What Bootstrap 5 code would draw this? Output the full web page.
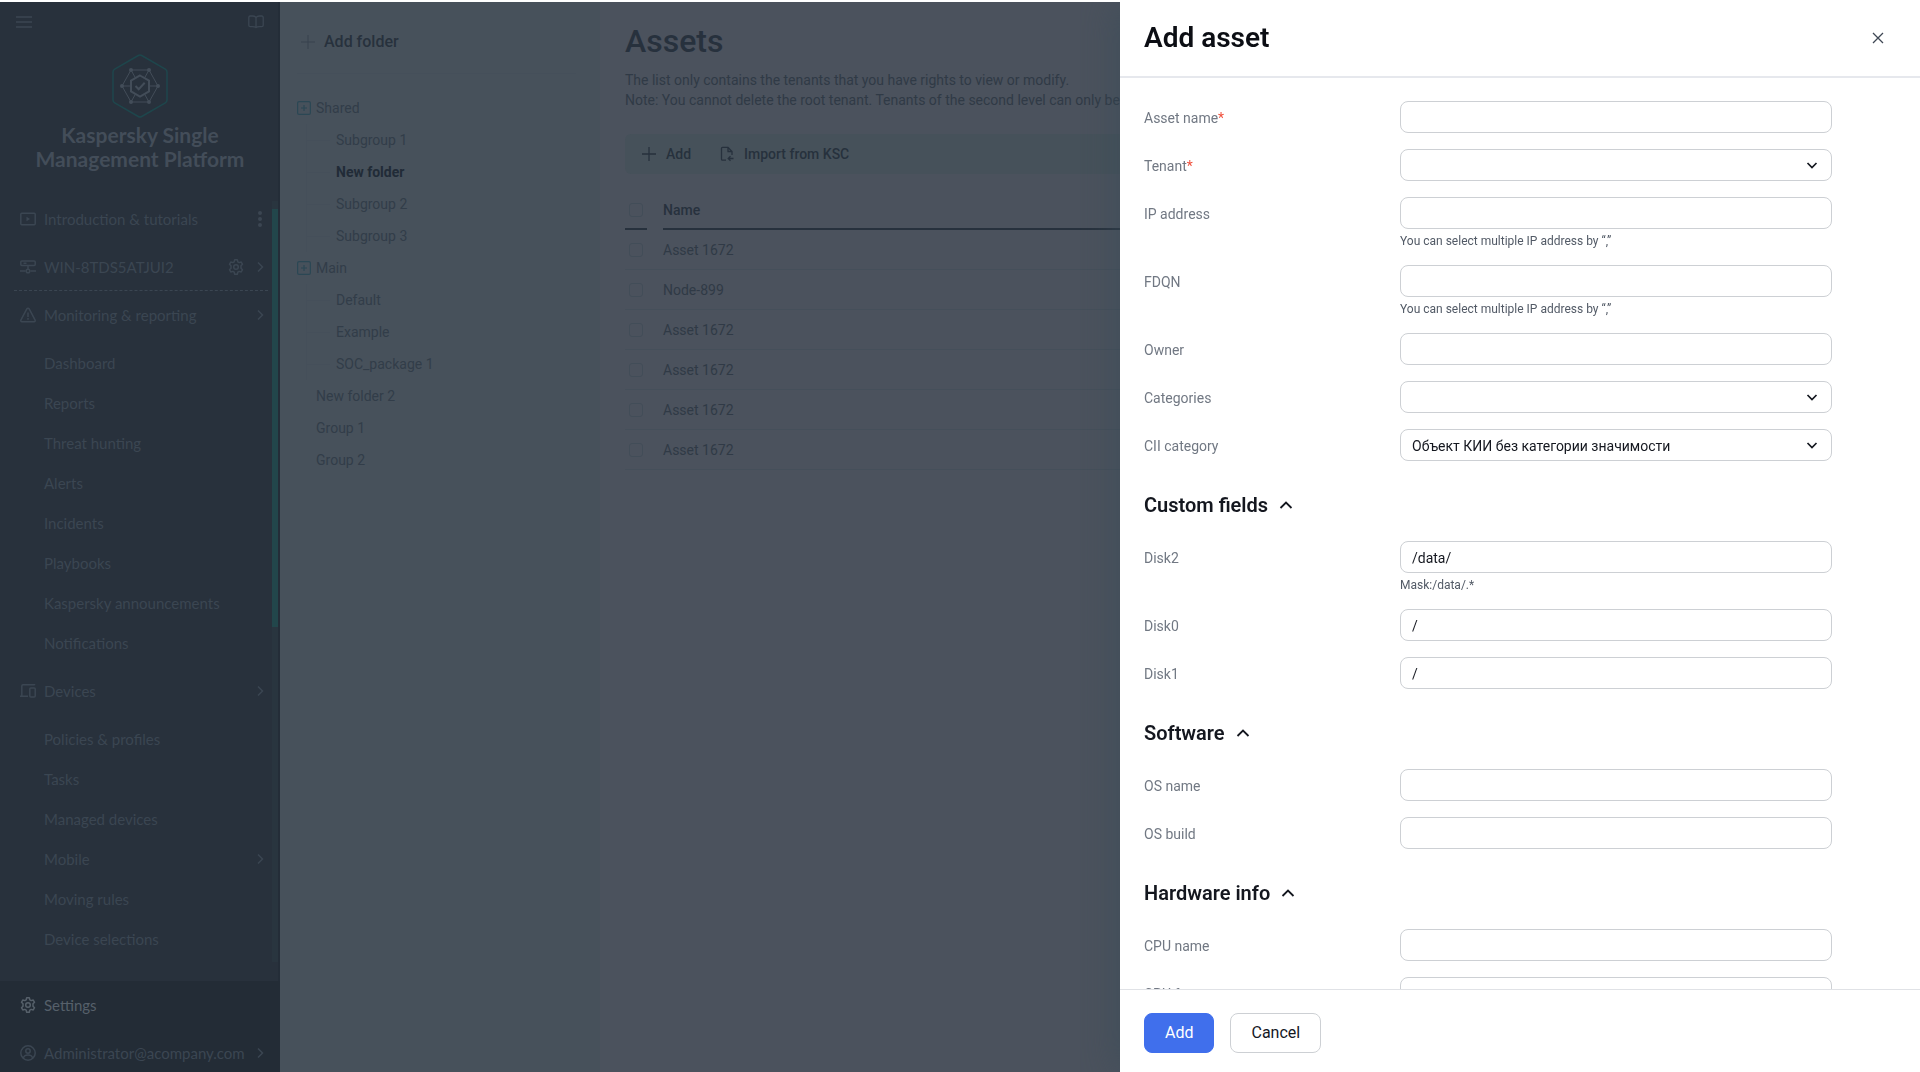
<!DOCTYPE html>
<html lang="en">
<head>
<meta charset="utf-8">
<meta name="viewport" content="width=device-width, initial-scale=1">
<title>Assets – Add asset</title>
<link href="https://cdn.jsdelivr.net/npm/bootstrap@5.3.0/dist/css/bootstrap.min.css" rel="stylesheet">
<style>
body{font-family:Roboto,"Noto Sans",sans-serif;font-size:14px;line-height:20px;color:#303a46;background:#fff}
svg{display:block;flex:none;fill:none;stroke:currentColor;stroke-width:1.5}
.app-shell{height:100vh;padding-top:2px;overflow:hidden}
/* navigation */
.side-nav{width:280px;background:#28313c;box-shadow:inset -2px 0 #242d38;color:#3b4652;font-family:Lato,"Noto Sans",sans-serif;font-size:15px}
.side-nav a,.side-nav button{color:inherit;text-decoration:none}
.side-top{padding:12px 16px 0}
.product{color:#434d59;font-size:21px;line-height:24px;font-weight:700;padding:24px 20px}
.product h1{font:inherit;margin:5px 0 0}
.product svg{color:#434d59}
.nav-main{height:48px;padding:0 4px 0 20px}
.nav-main svg:first-child{margin-right:8px}
.nav-sub{padding:4px 0}
.nav-sub a{height:40px;padding:0 4px 0 44px}
.dashed{border-bottom:1px dashed #3b4652;margin:0 4px 0 14px;padding:0 0 0 6px}
.nav-scroll{width:6px;background:#29353f;margin:6px 2px 19px 0;padding-top:8px}
.nav-thumb{width:6px;height:418px;background:#22464b}
.side-foot{background:#232c36;height:91px;overflow:hidden}
.side-foot .nav-main{padding-right:12px}
.side-foot .lit{color:#56606a}
/* folder tree */
.folders{width:320px;background:#47515b;padding:0 24px 0 17px;color:#323d49}
.add-folder{font-size:16px;font-weight:500;height:72px;padding:8px 0 0 4px;gap:9px;color:#27313d;border:0;border-bottom:1px solid #454f5a;background:none}
.add-folder svg{color:#39434f}
.tree{padding-top:18px}
.tree a,.tree button{color:inherit;text-decoration:none;height:32px;padding:0;border:0;background:none;font-size:14px}
.tree .node{gap:5px}
.tree .node svg{color:#2b4754}
.tree .leaf{padding-left:19px}
.tree .branch{margin-left:9px;border-left:1px solid #454f5a}
.tree .branch a{gap:6px;padding-left:0}
.tree .branch a::before{content:"";width:23px;height:1px;background:#454f5a}
.tree .branch .picked{color:#212b37;font-weight:700}
/* asset list */
.assets{background:#4b525d;padding:0 0 0 25px;min-width:0}
.assets h2{font-size:32px;line-height:40px;font-weight:500;margin:19px 0 9px;color:#27313d}
.tool-strip{background:#46515a;height:40px;border-radius:6px;margin-top:24px;padding:0 16px;gap:28px}
.tool-strip button{border:0;background:none;padding:0;color:#27313d;font-weight:500;gap:9px}
.list-grid{margin-top:17px;border-collapse:separate;border-spacing:0;width:100%}
.list-grid th,.list-grid td{height:40px;padding:0;border-bottom:1px solid #454f5a;font-weight:400;vertical-align:middle}
.list-grid th{font-weight:500;height:39px;color:#27313d;border-bottom:2px solid #27313d}
.list-grid .gap-col{border-bottom-color:#4b525d;width:16px}
.list-grid td.gap-col{border-bottom-color:#454f5a}
.list-grid .tick{width:22px;padding-left:4px}
.list-grid .form-check-input{display:block;width:14px;height:14px;margin:0;background:transparent;border:1px solid #424d58;border-radius:3px}
/* drawer */
.drawer.offcanvas{--bs-offcanvas-width:800px;top:2px;max-width:100%;border:0;background:#fff;color:#14171f;box-shadow:0 0 36px rgba(58,76,88,.75);clip-path:inset(0 0 0 -40px);visibility:visible}
.drawer-head{height:76px;border-bottom:2px solid #e6e8ed;padding:0 31px 2px 24px}
.drawer-head h2{font-size:28px;line-height:36px;font-weight:600;margin:0;color:#0c0e14}
.drawer-head button{border:0;background:none;padding:4px 5px;color:#3f4754}
.drawer-body{padding:23px 88px 0 24px;overflow:hidden;flex:1 1 0;min-height:0}
.field{margin-bottom:16px}
.field label{width:256px;flex:none;line-height:30px;padding-top:2px;color:#717883}
.field label span{color:#f0503c}
.field .form-control,.field .form-select{height:32px;border:1px solid #cdd0d4;border-radius:8px;font-size:14px;line-height:20px;padding:6px 11px 4px;color:#14171f;background-color:#fff}
.field .form-select{background-image:url("data:image/svg+xml,%3Csvg xmlns='http://www.w3.org/2000/svg' viewBox='0 0 16 16'%3E%3Cpath d='M3.5 6 8 10.5 12.5 6' fill='none' stroke='%2314171f' stroke-width='1.7'/%3E%3C/svg%3E");background-size:16px 16px;background-position:right 11px center;padding-right:36px}
.field .hint{font-size:12px;line-height:16px;margin-top:4px;color:#525a66}
.group-head{border:0;background:none;padding:0;margin:32px 0 24px;font-size:20px;line-height:24px;font-weight:600;gap:10px;color:#14171f}
.group-head svg{stroke-width:1.8}
.drawer-foot{border-top:1px solid #e0e2e6;height:83px;padding:23px 24px 0;gap:16px}
.drawer-foot .btn{height:40px;padding:0 20px;font-size:16px;line-height:24px;border-radius:8px}
.drawer-foot .btn-primary{background:#406fec;border-color:#406fec}
.drawer-foot .btn-plain{border:1px solid #cdd0d4;background:#fff;color:#14171f}
</style>
<script src="https://cdn.jsdelivr.net/npm/bootstrap@5.3.0/dist/js/bootstrap.bundle.min.js"></script>
</head>
<body>
<svg class="d-none">
  <symbol id="i-right" viewBox="0 0 16 16"><path d="M6 3.500 10.500 8 6 12.500"/></symbol>
  <symbol id="i-up" viewBox="0 0 16 16"><path d="M2.500 11 8 5.500 13.500 11"/></symbol>
  <symbol id="i-gear" viewBox="0 0 16 16"><path d="M6.700.8h2.600l.5 2 1.400.8 2-.6 1.300 2.300L13 6.800v2.400l1.500 1.500-1.300 2.300-2-.6-1.400.8-.5 2H6.700l-.5-2-1.400-.8-2 .6-1.300-2.300L3 9.200V6.800L1.500 5.300 2.800 3l2 .6 1.400-.8z" stroke-linejoin="round"/><circle cx="8" cy="8" r="2.300"/></symbol>
  <symbol id="i-expand" viewBox="0 0 14 14"><rect x=".6" y=".6" width="12.800" height="12.800" rx="1.500" stroke-width="1.200"/><path d="M7 4v6M4 7h6" stroke-width="1.200"/></symbol>
</svg>

<div class="app-shell d-flex">
  <nav class="side-nav d-flex flex-column flex-shrink-0" aria-label="Main">
    <div class="side-top d-flex justify-content-between">
      <button class="btn p-0 border-0" aria-label="Menu"><svg width="16" height="16"><path d="M0 3h16M0 8h16M0 13h16"/></svg></button>
      <button class="btn p-0 border-0" aria-label="Guide"><svg width="16" height="16"><path d="M8 3.500C7 2.300 6 2 4.500 2H2.200C1.300 2 .8 2.500.8 3.400v7.800c0 .9.500 1.400 1.400 1.400h2.300c1.500 0 2.700.2 3.500 1 .8-.8 2-1 3.500-1h2.300c.9 0 1.400-.5 1.400-1.400V3.400c0-.9-.5-1.400-1.400-1.400h-2.300C10 2 9 2.300 8 3.500zM8 3.500v10" stroke-width="1.300"/></svg></button>
    </div>
    <div class="product d-flex flex-column align-items-center text-center">
      <svg width="56" height="64" viewBox="0 0 56 64">
        <path d="M26.300 1.500q1.700-1 3.400 0l23.600 13.600q1.700 1 1.700 3v27.800q0 2-1.700 3L29.700 62.500q-1.700 1-3.400 0L2.700 48.900q-1.700-1-1.700-3V18.100q0-2 1.700-3z" stroke="#1e464c"/>
        <path d="M19 16h18l9 16-9 16H19l-9-16zM19 16l4.500 8M37 16l-4.500 8M19 48l4.500-8M37 48l-4.500-8M10 32h8M38 32h8" stroke-width="1"/>
        <path d="M28 21.500 37 26.700v10.600L28 42.500l-9-5.200V26.700z" stroke-width="2"/>
        <path d="m23.500 32 3.200 3.200 6-6.400" stroke-width="2"/>
        <g fill="currentColor" stroke="none"><circle cx="19" cy="16" r="2"/><circle cx="37" cy="16" r="2"/><circle cx="46" cy="32" r="2"/><circle cx="37" cy="48" r="2"/><circle cx="19" cy="48" r="2"/><circle cx="10" cy="32" r="2"/></g>
      </svg>
      <h1>Kaspersky Single<br>Management Platform</h1>
    </div>
    <div class="d-flex flex-fill overflow-hidden">
      <div class="flex-fill">
        <a href="#" class="nav-main d-flex align-items-center"><svg width="16" height="16"><rect x=".8" y="2.300" width="14.400" height="11.400" rx="1"/><path d="M6.500 5.800v4.400L10 8z" fill="currentColor" stroke="none"/></svg><span class="flex-fill">Introduction &amp; tutorials</span><svg width="16" height="16" viewBox="-6 0 16 16"><g fill="currentColor" stroke="none"><circle cx="2" cy="2" r="2"/><circle cx="2" cy="8" r="2"/><circle cx="2" cy="14" r="2"/></g></svg></a>
        <a href="#" class="nav-main dashed d-flex align-items-center"><svg width="16" height="16"><rect x=".8" y="2" width="14.400" height="4.500" rx="1"/><path d="M3.500 4.200h3M8 6.500v4M0 12h5.500M10.500 12H16"/><circle cx="8" cy="12" r="1.800"/></svg><span class="flex-fill">WIN-8TDS5ATJUI2</span><svg width="16" height="16" class="me-2"><use href="#i-gear"/></svg><svg width="16" height="16"><use href="#i-right"/></svg></a>
        <a href="#" class="nav-main d-flex align-items-center"><svg width="16" height="16"><path d="M8 1.200q.8 0 1.200.7l5.800 11q.7 1.700-1 1.900H2q-1.700-.2-1-1.900l5.800-11q.4-.7 1.200-.7zM8 5.500v4.500M8 11v1.700"/></svg><span class="flex-fill">Monitoring &amp; reporting</span><svg width="16" height="16"><use href="#i-right"/></svg></a>
        <div class="nav-sub">
          <a href="#" class="d-flex align-items-center">Dashboard</a>
          <a href="#" class="d-flex align-items-center">Reports</a>
          <a href="#" class="d-flex align-items-center">Threat hunting</a>
          <a href="#" class="d-flex align-items-center">Alerts</a>
          <a href="#" class="d-flex align-items-center">Incidents</a>
          <a href="#" class="d-flex align-items-center">Playbooks</a>
          <a href="#" class="d-flex align-items-center">Kaspersky announcements</a>
          <a href="#" class="d-flex align-items-center">Notifications</a>
        </div>
        <a href="#" class="nav-main d-flex align-items-center"><svg width="16" height="16"><path d="M14.500 2.200v-.4H3q-1.200 0-1.200 1.200v9.500M0 13.300h8"/><rect x="9.800" y="5" width="5.400" height="9" rx="1"/></svg><span class="flex-fill">Devices</span><svg width="16" height="16"><use href="#i-right"/></svg></a>
        <div class="nav-sub">
          <a href="#" class="d-flex align-items-center">Policies &amp; profiles</a>
          <a href="#" class="d-flex align-items-center">Tasks</a>
          <a href="#" class="d-flex align-items-center">Managed devices</a>
          <a href="#" class="d-flex align-items-center justify-content-between">Mobile<svg width="16" height="16"><use href="#i-right"/></svg></a>
          <a href="#" class="d-flex align-items-center">Moving rules</a>
          <a href="#" class="d-flex align-items-center">Device selections</a>
        </div>
      </div>
      <div class="nav-scroll flex-shrink-0"><div class="nav-thumb"></div></div>
    </div>
    <div class="side-foot flex-shrink-0">
      <a href="#" class="nav-main lit d-flex align-items-center"><svg width="16" height="16"><use href="#i-gear"/></svg>Settings</a>
      <a href="#" class="nav-main d-flex align-items-center"><svg width="16" height="16"><circle cx="8" cy="8" r="7.200"/><circle cx="8" cy="6" r="2.200"/><path d="M3.500 13q.5-3 4.500-3t4.500 3"/></svg><span class="flex-fill">Administrator@acompany.com</span><svg width="16" height="16"><use href="#i-right"/></svg></a>
    </div>
  </nav>

  <aside class="folders flex-shrink-0">
    <button class="add-folder d-flex align-items-center w-100"><svg width="14" height="14"><path d="M7 0v14M0 7h14" stroke-width="1"/></svg>Add folder</button>
    <div class="tree">
      <button class="node d-flex align-items-center"><svg width="14" height="14"><use href="#i-expand"/></svg>Shared</button>
      <div class="branch">
        <a href="#" class="d-flex align-items-center">Subgroup 1</a>
        <a href="#" class="d-flex align-items-center picked">New folder</a>
        <a href="#" class="d-flex align-items-center">Subgroup 2</a>
        <a href="#" class="d-flex align-items-center">Subgroup 3</a>
      </div>
      <button class="node d-flex align-items-center"><svg width="14" height="14"><use href="#i-expand"/></svg>Main</button>
      <div class="branch">
        <a href="#" class="d-flex align-items-center">Default</a>
        <a href="#" class="d-flex align-items-center">Example</a>
        <a href="#" class="d-flex align-items-center">SOC_package 1</a>
      </div>
      <a href="#" class="leaf d-flex align-items-center">New folder 2</a>
      <a href="#" class="leaf d-flex align-items-center">Group 1</a>
      <a href="#" class="leaf d-flex align-items-center">Group 2</a>
    </div>
  </aside>

  <main class="assets flex-fill">
    <h2>Assets</h2>
    <p class="mb-0 text-nowrap">The list only contains the tenants that you have rights to view or modify.<br>Note: You cannot delete the root tenant. Tenants of the second level can only be deleted.</p>
    <div class="tool-strip d-flex align-items-center">
      <button class="d-flex align-items-center"><svg width="16" height="16"><path d="M8 1v14M1 8h14" stroke-width="1.300"/></svg>Add</button>
      <button class="d-flex align-items-center"><svg width="16" height="16"><path d="M7 14.200H3.500q-1 0-1-1V2.300q0-1 1-1H9L13 5.500V9M9 1.500V5.500h4M14.500 12.500H9.500M11.500 10.200l-2.300 2.300 2.300 2.300" stroke-width="1.300"/></svg>Import from KSC</button>
    </div>
    <table class="list-grid">
      <thead><tr><th class="tick"><input class="form-check-input" type="checkbox" aria-label="Select all"></th><th class="gap-col"></th><th>Name</th></tr></thead>
      <tbody>
        <tr><td class="tick"><input class="form-check-input" type="checkbox" aria-label="Select row"></td><td class="gap-col"></td><td>Asset 1672</td></tr>
        <tr><td class="tick"><input class="form-check-input" type="checkbox" aria-label="Select row"></td><td class="gap-col"></td><td>Node-899</td></tr>
        <tr><td class="tick"><input class="form-check-input" type="checkbox" aria-label="Select row"></td><td class="gap-col"></td><td>Asset 1672</td></tr>
        <tr><td class="tick"><input class="form-check-input" type="checkbox" aria-label="Select row"></td><td class="gap-col"></td><td>Asset 1672</td></tr>
        <tr><td class="tick"><input class="form-check-input" type="checkbox" aria-label="Select row"></td><td class="gap-col"></td><td>Asset 1672</td></tr>
        <tr><td class="tick"><input class="form-check-input" type="checkbox" aria-label="Select row"></td><td class="gap-col"></td><td>Asset 1672</td></tr>
      </tbody>
    </table>
  </main>
</div>

<section class="drawer offcanvas offcanvas-end show" data-bs-backdrop="false" data-bs-scroll="true" aria-labelledby="drawer-title">
  <header class="drawer-head d-flex align-items-center justify-content-between flex-shrink-0">
    <h2 id="drawer-title">Add asset</h2>
    <button type="button" aria-label="Close"><svg width="12" height="12"><path d="m1 1 10 10M11 1 1 11" stroke-width="1.300"/></svg></button>
  </header>
  <form class="drawer-body">
    <div class="field d-flex"><label for="f-name">Asset name<span>*</span></label><div class="flex-fill"><input id="f-name" class="form-control" type="text"></div></div>
    <div class="field d-flex"><label for="f-tenant">Tenant<span>*</span></label><div class="flex-fill"><select id="f-tenant" class="form-select"><option></option></select></div></div>
    <div class="field d-flex"><label for="f-ip">IP address</label><div class="flex-fill"><input id="f-ip" class="form-control" type="text"><div class="hint">You can select multiple IP address by “,”</div></div></div>
    <div class="field d-flex"><label for="f-fdqn">FDQN</label><div class="flex-fill"><input id="f-fdqn" class="form-control" type="text"><div class="hint">You can select multiple IP address by “,”</div></div></div>
    <div class="field d-flex"><label for="f-owner">Owner</label><div class="flex-fill"><input id="f-owner" class="form-control" type="text"></div></div>
    <div class="field d-flex"><label for="f-cat">Categories</label><div class="flex-fill"><select id="f-cat" class="form-select"><option></option></select></div></div>
    <div class="field d-flex"><label for="f-cii">CII category</label><div class="flex-fill"><select id="f-cii" class="form-select"><option>Объект КИИ без категории значимости</option></select></div></div>
    <button type="button" class="group-head d-flex align-items-center">Custom fields<svg width="16" height="16"><use href="#i-up"/></svg></button>
    <div class="field d-flex"><label for="f-d2">Disk2</label><div class="flex-fill"><input id="f-d2" class="form-control" type="text" value="/data/"><div class="hint">Mask:/data/.*</div></div></div>
    <div class="field d-flex"><label for="f-d0">Disk0</label><div class="flex-fill"><input id="f-d0" class="form-control" type="text" value="/"></div></div>
    <div class="field d-flex"><label for="f-d1">Disk1</label><div class="flex-fill"><input id="f-d1" class="form-control" type="text" value="/"></div></div>
    <button type="button" class="group-head d-flex align-items-center">Software<svg width="16" height="16"><use href="#i-up"/></svg></button>
    <div class="field d-flex"><label for="f-os">OS name</label><div class="flex-fill"><input id="f-os" class="form-control" type="text"></div></div>
    <div class="field d-flex"><label for="f-build">OS build</label><div class="flex-fill"><input id="f-build" class="form-control" type="text"></div></div>
    <button type="button" class="group-head d-flex align-items-center">Hardware info<svg width="16" height="16"><use href="#i-up"/></svg></button>
    <div class="field d-flex"><label for="f-cpu">CPU name</label><div class="flex-fill"><input id="f-cpu" class="form-control" type="text"></div></div>
    <div class="field d-flex"><label for="f-freq">CPU frequency</label><div class="flex-fill"><input id="f-freq" class="form-control" type="text"></div></div>
  </form>
  <footer class="drawer-foot d-flex flex-shrink-0">
    <button type="button" class="btn btn-primary">Add</button>
    <button type="button" class="btn btn-plain">Cancel</button>
  </footer>
</section>
</body>
</html>
